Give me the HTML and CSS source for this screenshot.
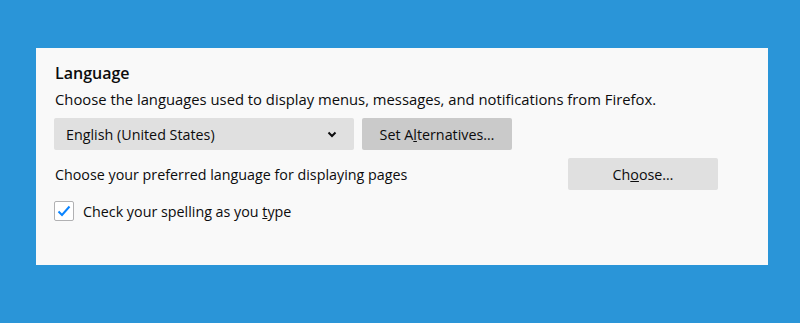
FILE: index.html
```html
<!DOCTYPE html>
<html lang="en">
<head>
    <meta charset="UTF-8">
    <meta name="viewport" content="width=device-width, initial-scale=1.0">
    <title>Language</title>
    <link rel="stylesheet" href="styles.css">
</head>
<body>
    <div class="panel">
        <h2 class="title">Language</h2>
        <p class="desc">Choose the languages used to display menus, messages, and notifications from Firefox.</p>

        <div class="row">
            <div class="select">
                <span>English (United States)</span>
                <svg class="chevron" width="10" height="7" viewBox="0 0 10 7">
                    <path d="M1.5 1.5 L5 5 L8.5 1.5" fill="none" stroke="#0c0c0d" stroke-width="2"/>
                </svg>
            </div>
            <button class="btn btn-dark">Set A<u>l</u>ternatives…</button>
        </div>

        <div class="row row-pages">
            <span class="label">Choose your preferred language for displaying pages</span>
            <button class="btn">Ch<u>o</u>ose…</button>
        </div>

        <label class="check">
            <span class="box">
                <svg width="14" height="12" viewBox="0 0 14 12">
                    <path d="M1.5 6.5 L5 10 L12.5 1.5" fill="none" stroke="#0a84ff" stroke-width="2"/>
                </svg>
            </span>
            <span>Check your spelling as you <u>t</u>ype</span>
        </label>
    </div>
</body>
</html>
```

FILE: styles.css
```css
* {
    margin: 0;
    padding: 0;
    box-sizing: border-box;
    font-family: "Open Sans", "Noto Sans", sans-serif;
}

body {
    background-color: #2a95d8;
    padding: 48px 32px 58px 36px;
    color: #0c0c0d;
}

.panel {
    background-color: #f9f9f9;
    width: 732px;
    height: 217px;
    padding: 13px 19px 0 18px;
}

.title {
    font-size: 16px;
    font-weight: 600;
    line-height: 24px;
    padding-left: 1px;
}

.desc {
    font-size: 14.8px;
    line-height: 20px;
    margin-top: 4px;
    padding-left: 1px;
}

.row {
    display: flex;
    align-items: center;
    margin-top: 9px;
}

.select {
    width: 300px;
    height: 32px;
    background-color: #e0e0e0;
    border-radius: 2px;
    display: flex;
    align-items: center;
    justify-content: space-between;
    padding: 0 17px 0 12px;
    font-size: 14.3px;
}

.btn {
    height: 32px;
    width: 150px;
    border: none;
    border-radius: 2px;
    background-color: #e0e0e0;
    color: #0c0c0d;
    font-size: 14.3px;
    margin-left: 8px;
}

.btn-dark {
    background-color: #cacaca;
}

.row-pages {
    margin-top: 8px;
    justify-content: space-between;
    padding-right: 31px;
}

.label {
    font-size: 14.3px;
    padding-left: 1px;
}

.check {
    display: flex;
    align-items: center;
    margin-top: 11px;
    font-size: 14.3px;
}

.box {
    width: 20px;
    height: 20px;
    border: 1px solid #b1b1b3;
    border-radius: 2px;
    background-color: #fff;
    display: flex;
    align-items: center;
    justify-content: center;
    margin-right: 9px;
}
```
